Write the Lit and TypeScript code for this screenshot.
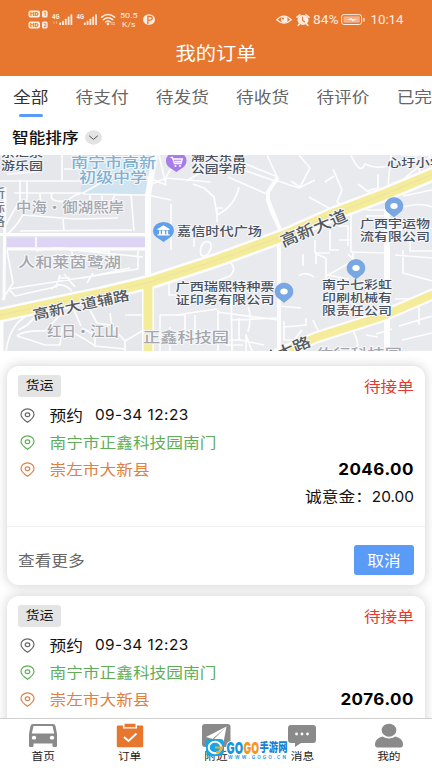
import { LitElement, html, svg, css } from 'lit';
import { customElement, property } from 'lit/decorators.js';
import { classMap } from 'lit/directives/class-map.js';

@customElement('status-bar')
export class StatusBar extends LitElement {
    static styles = css`
        :host {
            display: flex;
            align-items: center;
            justify-content: space-between;
            height: 38px;
            padding: 0 28px;
            box-sizing: border-box;
            color: #fdece1;
            font-family: Roboto, "Noto Sans", sans-serif;
        }

        svg {
            display: block;
            flex: none;
        }

        text {
            fill: currentColor;
        }

        .cut {
            fill: #e7762f;
        }
    `;

    render() {
        return html`
            <svg width="130" height="38" viewBox="28 0 130 38" fill="#fdece1">
                ${[10.5, 21.5].map((y, i) => svg`
                    <rect x="28.5" y=${y} width="11.5" height="7" rx="2"/>
                    <text class="cut" x="30" y=${y + 5.7} font-size="6" font-weight="900" textLength="8.5" lengthAdjust="spacingAndGlyphs">HD</text>
                    <rect x="42" y=${y} width="5.6" height="7" rx="1.6"/>
                    <text class="cut" x="43.4" y=${y + 5.6} font-size="5.6" font-weight="700">${i + 1}</text>
                `)}
                ${[52, 76.6].map((x, i) => svg`
                    <text x=${x} y="18.6" font-size="6.4" font-weight="700" textLength="7.5" lengthAdjust="spacingAndGlyphs">4G</text>
                    ${[2.5, 4.2, 6.3, 8.4, 10.8].map((h, n) => svg`<rect x=${x + 7.3 + n * 2.8} y=${25 - h} width="1.8" height=${h} rx=".6"/>`)}
                    ${i === 0 ? svg`<path d="M54 21v3M56.5 21v3" stroke="#fdece1" stroke-width=".8" opacity=".5"/>` : ''}
                `)}
                <g fill="none" stroke="#fdece1" stroke-width="1.5" stroke-linecap="round">
                    <path d="M101.6 17.2Q108 12 114.6 17.2M103.5 19.7Q108 16 112.7 19.7M105.6 22Q108 20.2 110.5 22"/>
                </g>
                <circle cx="108" cy="23.9" r="1.3"/>
                <path d="M111 22.8h4M111 24.3h4" stroke="#fdece1" stroke-width=".6"/>
                <text x="120" y="18.2" font-size="8" textLength="17.6" lengthAdjust="spacingAndGlyphs">50.5</text>
                <text x="122" y="27" font-size="8" textLength="13.4" lengthAdjust="spacingAndGlyphs">K/s</text>
                <ellipse cx="149" cy="19.5" rx="6" ry="5.3"/>
                <path d="M147.9 24v-7.5h2.6a1.8 1.8 0 0 1 0 3.6h-2" fill="none" stroke="#e7762f" stroke-width="1.3"/>
            </svg>
            <svg width="130" height="38" viewBox="274 0 130 38" fill="#fdece1">
                <path d="M276.7 19.7Q284 12.5 291.3 19.7Q284 26.5 276.7 19.7Z" fill="none" stroke="#fdece1" stroke-width="1.3"/>
                <circle cx="284.3" cy="19.7" r="3.3"/>
                <circle cx="283" cy="18.5" r="1.1" fill="#e7762f"/>
                <ellipse cx="303" cy="20" rx="5.5" ry="4.9"/>
                <path d="M297 17.2l3-2.3M309 17.2l-3-2.3M299.2 24.2l-1 1.1M306.8 24.2l1 1.1" stroke="#fdece1" stroke-width="1.6" stroke-linecap="round"/>
                <path d="M302.6 16.8v3.6l2.4 1.6" stroke="#e7762f" stroke-width="1.1" fill="none"/>
                <text x="313" y="24.2" font-size="12" textLength="25.5" lengthAdjust="spacingAndGlyphs">84%</text>
                <rect x="341.6" y="14.6" width="20" height="9.9" rx="2.4" fill="none" stroke="#fdece1" stroke-width="1"/>
                <rect x="343.4" y="16.3" width="16.4" height="6.5" rx="1" opacity=".5"/>
                <path d="M346.5 19.8l5.5-2v1.2l5.5.4-5.5 2.2v-1.3z"/>
                <rect x="363.2" y="17.8" width="1.4" height="4" rx=".7"/>
                <text x="370.5" y="24.2" font-size="12" textLength="33" lengthAdjust="spacingAndGlyphs">10:14</text>
            </svg>
        `;
    }
}

type Label = [text: string, x: number, y: number, width: number, size: number, kind: string, angle?: number];

// y is the vertical middle of the glyphs
const LABELS: Label[] = [
    ['京汇泉', 1, 152.5, 42, 11.8, 'place'],
    ['游乐园', 1, 166, 42, 11.8, 'place'],
    ['南宁市高新', 71, 161.5, 85, 14, 'school'],
    ['初级中学', 79, 177.2, 68, 14, 'school'],
    ['所', -9, 193.5, 14, 12, 'edge'],
    ['际', -9, 208, 14, 12, 'edge'],
    ['路', -9, 222, 14, 12, 'edge'],
    ['中海·御湖熙岸', 16, 207, 108, 14.2, 'area'],
    ['人和莱茵鹭湖', 18, 262, 103, 13.7, 'area'],
    ['红日·江山', 47, 331, 72, 13.7, 'area'],
    ['正鑫科技园', 143, 337, 86, 13.2, 'area'],
    ['佑行科技园', 316, 354.5, 86, 13.2, 'area'],
    ['瀚天东富', 191, 156.3, 55, 11.6, 'place'],
    ['公园学府', 191, 169, 55, 11.6, 'place'],
    ['嘉信时代广场', 177, 232, 85, 12, 'place'],
    ['心圩小学', 387, 163, 57, 11.6, 'place'],
    ['广西宇运物', 360, 223.7, 70, 11.6, 'place'],
    ['流有限公司', 360, 236.7, 70, 11.6, 'place'],
    ['广西瑞熙特种票', 175.5, 287, 99, 11.6, 'place'],
    ['证印务有限公司', 175.5, 299.8, 99, 11.6, 'place'],
    ['南宁七彩虹', 322, 285, 70, 11.6, 'place'],
    ['印刷机械有', 322, 297.7, 70, 11.6, 'place'],
    ['限责任公司', 322, 310.3, 70, 11.6, 'place'],
    ['高新大道', 281, 242, 71, 15.5, 'road', -23],
    ['高新大道辅路', 33, 315, 98, 13.7, 'road', -12],
    ['科大路', 260, 361.5, 54, 14.5, 'road', -23],
];

const STREETS = [
    'M0 181H81M27 181V193M14 193H83L104 181M27 193Q28 218 5 236M20 180V200L4 228',
    'M62 155V181M36 155V172L7 174M64 169H81',
    'M23 215L75 219L118 218M63 219L64 231M20 231L132 230M40 194L41 205M131 194L134 231',
    'M83 194L147 195L171 200M52 193Q48 203 67 201Q75 194 80 194',
    'M102 194V202M115 194L111 204M90 194V204',
    'M36 237V247M36 251Q60 246 72 250V262M85 251H109V262M7 250L13 283L2 300M138 251V269L9 289M9 289L15 296L55 287',
    'M73 250L143 257M60 275L56 288M64 274L75 287M58 278H70M83 278L130 268M87 283L93 273M51 289Q61 280 72 291',
    'M3 320Q8 315 20 313M6 351Q10 323 30 314M17 336Q24 330 45 331L62 313M17 336L30 340L45 345H60L62 328',
    'M34 317Q30 325 18 330M62 328Q82 336 95 346L125 349M95 346V335L82 328M110 313L112 327L125 341L142 331M125 315H142M125 341V351M74 310L81 326M90 310L97 323L110 325',
    'M171 204V250M159 155L166 185L147 177M152 184L166 178L211 182M193 184L204 188L214 197L217 215',
    'M165 182Q170 161 187 165M186 181L209 168L230 168M194 237V247M205 242Q199 246 201 255Q207 259 211 248Q212 240 205 242',
    'M223 155L278 177M217 215Q235 206 239 187M223 208H217V222M228 177L269 195M217 161L278 182M267 155L278 179',
    'M278 178L268 192Q265 205 278 226L282 238M278 181L299 188L315 180M299 155L310 168L300 187L291 181',
    'M333 169L342 190L337 202L351 211M334 176L325 182M309 197L336 212M358 184L367 191L378 188V174M367 191L383 198',
    'M351 155Q360 176 365 164Q377 170 391 165M391 155L387 196M432 155L401 155M397 185L432 155M415 155L420 172',
    'M326 258V290M315 240V253H330M330 230V250H339M351 214V252L387 253M326 258L316 254V264M338 226H348V246M339 240H351',
    'M387 211V230L432 228M403 207Q420 202 432 207M403 196L432 190M366 210H387M366 216H386M403 250V273L432 281M410 237V251H432',
    'M353 251V261L328 275M327 275L349 279M303 254V266M299 276Q304 271 314 277M339 277V291M348 254L361 267M395 255L432 258',
    'M218 255Q241 265 230 276L217 281M217 312L279 320M230 320L277 318M246 335L252 351M246 334V351M279 306L301 308M284 321V340L300 340M284 327L306 325V318M294 340L302 330',
    'M313 320L319 333M353 331Q360 343 356 351M366 335L378 337M376 334L392 329M419 300V325M395 299L432 298M399 326L432 316M402 340L432 333M392 306L409 300',
    'M160 315V351M160 315H185V336M170 327V351M176 315L217 309M195 315V334M180 336L218 337M218 310V351M191 295H169V275L181 270',
    'M217 340H240L264 345M248 307Q252 316 248 332M239 318V340M231 283L232 351M226 345H243',
];

const PINS = [
    [394, 207],
    [356, 269],
    [284, 292.5],
];

@customElement('route-map')
export class RouteMap extends LitElement {
    static styles = css`
        :host {
            display: block;
            height: 196px;
            overflow: hidden;
        }

        svg {
            display: block;
        }

        text {
            font-family: "Noto Sans CJK SC", sans-serif;
            font-weight: 500;
            paint-order: stroke;
            stroke: #f6f7f9;
            stroke-width: 2px;
            stroke-linejoin: round;
        }

        .place { fill: #485160; }
        .edge { fill: #777a80; }
        .school { fill: #7fb1d3; }
        .area { fill: #a4a6ac; }
        .road { fill: #55575a; }
    `;

    renderLabel([text, x, y, width, size, kind, angle = 0]: Label) {
        return svg`<text
            class=${kind}
            transform="translate(${x} ${y}) rotate(${angle})"
            y=${size * 0.37}
            font-size=${size}
            textLength=${width}
            lengthAdjust="spacingAndGlyphs">${text}</text>`;
    }

    render() {
        return html`
            <svg width="432" height="196" viewBox="0 155 432 196">
                <rect y="155" width="432" height="196" fill="#e6e7eb"/>
                <path d="M150 155H432V351H150z" fill="#e9eaee"/>
                <path d="M82 155H151L147 194H81V176z" fill="#cfe4f0"/>
                <rect x="7" y="237.5" width="138" height="9.5" fill="#ded5f6"/>
                <g fill="none" stroke="#fdfdfe" stroke-linejoin="round">
                    <path d=${STREETS.join('')} stroke-width="1.7"/>
                    <path d="M0 351V313L3 320V351z" fill="#fdfdfe"/>
                    <path d="M155 155L148 195V285" stroke-width="6"/>
                    <path d="M0 234.5H147M7 249H146" stroke-width="3"/>
                    <path d="M5 187L4 300" stroke-width="3"/>
                    <path d="M278 177L268 192V200L281 232" stroke-width="4"/>
                    <path d="M279 242V351" stroke-width="4"/>
                    <path d="M387 205V351" stroke-width="6"/>
                    <path d="M148 285V351" stroke-width="12"/>
                    <path d="M-4 316L50 304.5L100 294L150 282L216 260.5L283 236L333 214L383 195L436 173" stroke-width="15"/>
                    <path d="M276 355L316 337.5L383 316L436 293" stroke-width="12"/>
                </g>
                <g fill="none" stroke="#f4ec9a">
                    <path d="M148 284V351" stroke-width="9"/>
                    <path d="M-4 316L50 304.5L100 294L150 282L216 260.5L283 236L333 214L383 195L436 173" stroke-width="10"/>
                    <path d="M276 355L316 337.5L383 316L436 293" stroke-width="8"/>
                </g>
                <path d="M-4 316L50 304.5L100 294L150 282L216 260.5L283 236L333 214L383 195L436 173" fill="none" stroke="#e3dda5" stroke-width=".6"/>
                ${LABELS.map((l) => this.renderLabel(l))}
                ${PINS.map(([x, y]) => svg`
                    <g transform="translate(${x} ${y})">
                        <path d="M0 10L-4.5 6.5A9 8.6 0 1 1 4.5 6.5z" fill="#79a7e3" stroke="#6b99d8" stroke-width=".5"/>
                        <ellipse rx="3.7" ry="3" cy="-1" fill="#fff"/>
                    </g>
                `)}
                <path d="M176.3 172L171 168.5Q166 166 166 161Q166 153 176.3 152Q186.5 153 186.5 161Q186.5 166 181.5 168.5z" fill="#a77bea"/>
                <path d="M170.5 157.5h2l2 6h6.5l1.3-4.5h-8.8M175 161.5h6.5" fill="none" stroke="#fff" stroke-width="1.3"/>
                <circle cx="175.5" cy="166" r="1" fill="#fff"/>
                <circle cx="180" cy="166" r="1" fill="#fff"/>
                <path d="M163.5 242L158.5 238.5Q153 236 153 230.5Q154 222.500 163.5 222Q173.5 222.5 174 230.5Q173.5 236 168.5 238.5z" fill="#5f9fee"/>
                <path d="M157.5 229L163.5 225.3L169.5 229V230h-12zM159 230.5h1.8v4h-1.8zM166.3 230.5h1.8v4h-1.8zM162 230.5h3v4h-3zM157.5 234.2h12v1.4h-12z" fill="#fff"/>
                <path d="M0 351.500V351H424zM424 351Q431 351.500 432 358V351z" fill="#fff"/>
            </svg>
        `;
    }
}

interface Order {
    time: string;
    from: string;
    to: string;
    price: string;
    deposit: string;
}

@customElement('order-card')
export class OrderCard extends LitElement {
    @property({ attribute: false }) order!: Order;

    static styles = css`
        :host {
            display: block;
            height: 219px;
            box-sizing: border-box;
            background: #fff;
            border-radius: 12px;
            font-size: 16.7px;
            color: #111;
        }

        .t {
            display: inline-block;
            white-space: pre;
            transform: scaleY(0.87);
        }

        .top {
            display: flex;
            justify-content: space-between;
            align-items: center;
            padding: 9px 11px 0 11px;
            height: 22px;
        }

        .tag {
            width: 43px;
            height: 22px;
            line-height: 21px;
            border-radius: 3px;
            background: #e4e4e4;
            text-align: center;
            font-size: 14px;
        }

        .state {
            color: #e5392d;
            line-height: 20px;
        }

        .rows {
            padding-top: 4.5px;
        }

        .line {
            display: flex;
            align-items: center;
            height: 27.2px;
            padding: 0 11px 0 13px;
            line-height: 26px;
        }

        .line svg {
            width: 15px;
            height: 15px;
            margin-right: 14.5px;
        }

        .num {
            font-family: Inter, sans-serif;
            font-size: 15.4px;
            letter-spacing: 0.45px;
            margin-left: 12px;
            transform: scaleY(0.95);
        }

        .from { color: #61ad57; }
        .to { color: #e08043; }

        .price {
            margin-left: auto;
            font-family: Inter, sans-serif;
            font-size: 17px;
            font-weight: 700;
            letter-spacing: 0.5px;
            color: #000;
            transform: scaleY(0.95);
        }

        .deposit {
            display: flex;
            justify-content: flex-end;
            height: 28px;
            line-height: 27px;
            padding: 0 11px;
        }

        .deposit .num {
            margin-left: 0;
            letter-spacing: 0;
        }

        .foot {
            display: flex;
            align-items: center;
            justify-content: space-between;
            height: 58px;
            margin-top: 14.5px;
            padding: 10px 11px 0;
            box-sizing: border-box;
            border-top: 1px solid #f0f0f0;
            color: #666;
        }

        .foot > .t {
            line-height: 24px;
            margin-bottom: 1px;
        }

        button {
            width: 60px;
            height: 30px;
            padding: 0;
            border: none;
            border-radius: 3px;
            background: #5a9bf8;
            color: #fff;
            font: inherit;
            line-height: 27px;
        }
    `;

    pin(color: string) {
        return html`
            <svg viewBox="0 0 15 15" fill="none" stroke=${color} stroke-width="1.15">
                <path d="M7.5 14.2Q1 9.800 1 6.4A6.5 5.6 0 0 1 14 6.4Q14 9.8 7.5 14.2Z"/>
                <ellipse cx="7.5" cy="6.7" rx="2.3" ry="1.9"/>
            </svg>
        `;
    }

    render() {
        const { time, from, to, price, deposit } = this.order;
        return html`
            <div class="top">
                <div class="tag"><span class="t">货运</span></div>
                <span class="t state">待接单</span>
            </div>
            <div class="rows">
                <div class="line">${this.pin('#666')}<span class="t">预约</span><span class="t num">${time}</span></div>
                <div class="line from">${this.pin('#61ad57')}<span class="t">${from}</span></div>
                <div class="line to">${this.pin('#e08043')}<span class="t">${to}</span><span class="t price">${price}</span></div>
            </div>
            <div class="deposit"><span class="t">诚意金：</span><span class="t num">${deposit}</span></div>
            <div class="foot">
                <span class="t">查看更多</span>
                <button><span class="t">取消</span></button>
            </div>
        `;
    }
}

@customElement('app-root')
export class AppRoot extends LitElement {
    static styles = css`
        :host {
            display: flex;
            flex-direction: column;
            width: 432px;
            height: 768px;
            overflow: hidden;
            background: #fff;
            font-family: "Noto Sans CJK SC", sans-serif;
        }

        .t {
            display: inline-block;
            transform: scaleY(0.87);
        }

        header {
            flex: none;
            height: 75.5px;
            background: #e7762f;
            color: #fff;
        }

        h1 {
            margin: 0;
            font-size: 20.3px;
            font-weight: 400;
            line-height: 29px;
            text-align: center;
        }

        .tabs {
            display: flex;
            flex: none;
            gap: 27.2px;
            height: 46px;
            padding-left: 13px;
            font-size: 17.7px;
            line-height: 41px;
            white-space: nowrap;
            color: #666;
        }

        .tab.active {
            display: flex;
            flex-direction: column;
            align-items: center;
            color: #333;
        }

        .tab.active::after {
            content: "";
            width: 24px;
            height: 3px;
            margin-top: -3px;
            border-radius: 2px;
            background: #5a9bf8;
        }

        .sort {
            display: flex;
            flex: none;
            align-items: center;
            gap: 6px;
            height: 31.5px;
            padding: 0 0 2px 12px;
            font-size: 16.7px;
            font-weight: 500;
            line-height: 29px;
            color: #111;
        }

        route-map {
            flex: none;
        }

        .list {
            display: flex;
            flex: 1;
            flex-direction: column;
            gap: 11px;
            min-height: 0;
            padding: 15px 7px 0;
            overflow: hidden;
            background: #fff;
        }

        order-card {
            flex: none;
            box-shadow: 0 0 11px 1px rgba(0, 0, 0, 0.17);
        }

        nav {
            display: flex;
            flex: none;
            height: 50px;
            box-sizing: border-box;
            border-top: 1px solid #cfcfcf;
            background: #fff;
            position: relative;
        }

        .item {
            display: flex;
            flex: 1;
            flex-direction: column;
            align-items: center;
            padding-top: 4px;
            font-size: 11.7px;
            line-height: 17px;
            color: #222;
            fill: #8a8a8a;
        }

        .item.on {
            fill: #e7762f;
        }

        .item svg {
            width: 30px;
            height: 26px;
            margin-bottom: -2px;
            flex: none;
        }

        .item .t {
            transform: scaleY(0.9);
        }

        .mark {
            position: absolute;
            left: 204px;
            bottom: 4px;
        }

        .mark text {
            font-family: Inter, "Noto Sans CJK SC", sans-serif;
        }
    `;

    tabs = ['全部', '待支付', '待发货', '待收货', '待评价', '已完成'];

    orders: Order[] = [
        { time: '09-34 12:23', from: '南宁市正鑫科技园南门', to: '崇左市大新县', price: '2046.00', deposit: '20.00' },
        { time: '09-34 12:23', from: '南宁市正鑫科技园南门', to: '崇左市大新县', price: '2076.00', deposit: '20.00' },
    ];

    nav = [
        {
            label: '首页',
            icon: svg`<path fill-rule="evenodd" d="M5 1h20q2 0 2.500 2L29 11v12q0 1-1 1h-2.500q-1 0-1-1v-2.500h-19v2.500q0 1-1 1H2q-1 0-1-1V11L2.500 3Q3 1 5 1zM5.500 3L3.800 10.500h22.400L24.500 3zM6 12.800a2.200 1.900 0 1 0 .01 0zM24 12.800a2.200 1.900 0 1 0 .01 0z"/>`,
        },
        {
            label: '订单',
            icon: svg`<path d="M3 2.500h5v3h14v-3h5q1.200 0 1.200 1.200V23q0 1.200-1.200 1.200H3q-1.200 0-1.200-1.200V3.700Q1.800 2.500 3 2.500zM9.500.8h11v3.500h-11z"/><path d="M9 14l4.500 4L21.500 10.500" fill="none" stroke="#fff" stroke-width="1.800"/>`,
        },
        {
            label: '附近',
            icon: svg`<rect x="1" y="1" width="28.500" height="23" rx="3"/><path d="M25.500 3.500L5 14l6.500 2zM25.500 3.500L12.500 16.500v4.500l3-3.500 7 2z" fill="#fff"/>`,
        },
        {
            label: '消息',
            icon: svg`<path d="M4 2h22q3 0 3 3v12q0 3-3 3H14l-6 4v-4H4q-3 0-3-3V5q0-3 3-3z"/><g fill="#fff"><circle cx="9.500" cy="11" r="1.400"/><circle cx="15" cy="11" r="1.400"/><circle cx="20.500" cy="11" r="1.400"/></g>`,
        },
        {
            label: '我的',
            icon: svg`<ellipse cx="15" cy="7.200" rx="7.300" ry="6.500"/><path d="M8.500 13.500Q15 17.500 21.500 13.500Q29 15.500 29 21.500Q29 24.500 26.500 24.500H3.500Q1 24.500 1 21.500Q1 15.500 8.500 13.500z"/>`,
        },
    ];

    render() {
        return html`
            <header>
                <status-bar></status-bar>
                <h1><span class="t">我的订单</span></h1>
            </header>
            <div class="tabs">
                ${this.tabs.map((tab, i) => html`
                    <div class=${classMap({ tab: true, active: i === 0 })}><span class="t">${tab}</span></div>
                `)}
            </div>
            <div class="sort">
                <span class="t">智能排序</span>
                <svg width="17" height="15" viewBox="0 0 17 15">
                    <ellipse cx="8.5" cy="7.5" rx="8.5" ry="7.2" fill="#e3e3e3"/>
                    <path d="M4.2 5.8L8.5 9.4L12.8 5.8" fill="none" stroke="#555" stroke-width="1"/>
                </svg>
            </div>
            <route-map></route-map>
            <div class="list">
                ${this.orders.map((order) => html`<order-card .order=${order}></order-card>`)}
            </div>
            <nav>
                ${this.nav.map((item, i) => html`
                    <div class=${classMap({ item: true, on: i === 1 })}>
                        <svg viewBox="0 0 30 26">${item.icon}</svg>
                        <span class="t">${item.label}</span>
                    </div>
                `)}
                <svg class="mark" width="86" height="28" viewBox="204 736 86 28">
                    <path d="M208 739h12q4 0 4 4v8q0 5-6 5h-6q-6 0-6-6v-9q0-2 2-2z" fill="#18a5e4"/>
                    <ellipse cx="215" cy="747.5" rx="6.3" ry="5.7" fill="none" stroke="#fff" stroke-width="2"/>
                    <path d="M215 747.5h7q-1 5-6 5" fill="none" stroke="#f7a928" stroke-width="2"/>
                    <g font-weight="900" stroke="#fff" stroke-width="2" paint-order="stroke" stroke-linejoin="round">
                        <text x="226.5" y="753.5" font-size="16" textLength="16.5" lengthAdjust="spacingAndGlyphs" fill="#1594e0">GO</text>
                        <text x="243.5" y="753.5" font-size="16" textLength="15.5" lengthAdjust="spacingAndGlyphs" fill="#f7931e">GO</text>
                        <text x="259.5" y="752" font-size="12" textLength="28" lengthAdjust="spacingAndGlyphs" fill="#1582d4">手游网</text>
                    </g>
                    <text x="228" y="758.5" font-size="4.5" font-weight="700" textLength="58" fill="#2ba0e8">WWW.GOGO.CN</text>
                </svg>
            </nav>
        `;
    }
}
